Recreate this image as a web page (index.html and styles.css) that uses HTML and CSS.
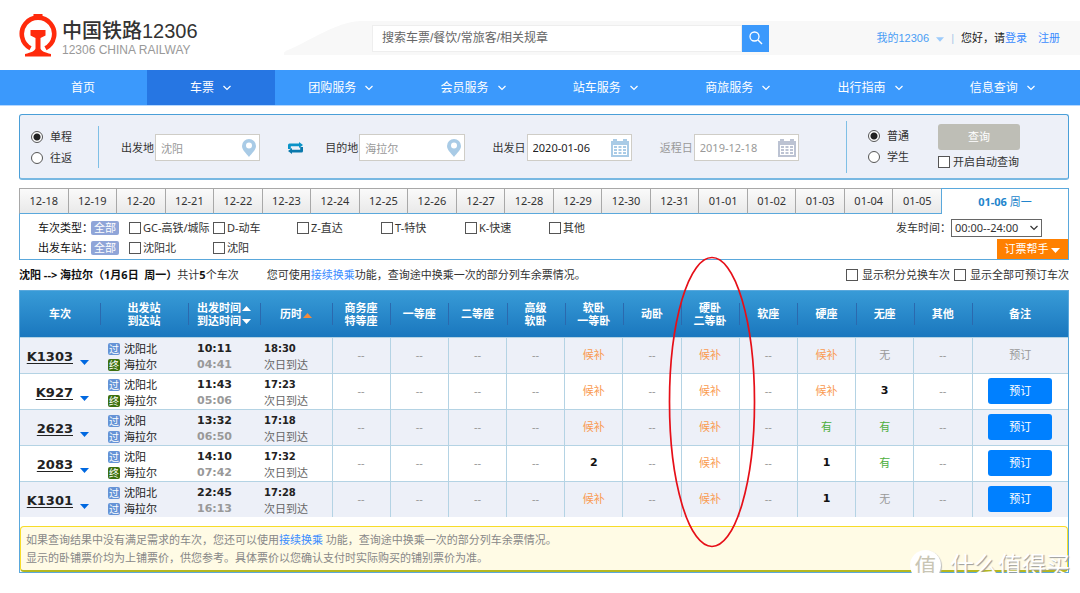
FILE: index.html
```html
<!DOCTYPE html>
<html lang="zh-CN">
<head>
<meta charset="utf-8">
<title>中国铁路12306</title>
<link rel="stylesheet" href="styles.css">
</head>
<body>
<svg class="defs" aria-hidden="true">
  <symbol id="chev" viewBox="0 0 10 6"><path d="M1.5 1 5 4.5 8.500 1" fill="none" stroke="currentColor" stroke-width="1.2"/></symbol>
  <symbol id="down" viewBox="0 0 9 5"><path d="M0 0h9L4.500 5z" fill="currentColor"/></symbol>
  <symbol id="up" viewBox="0 0 9 5"><path d="M0 5h9L4.500 0z" fill="currentColor"/></symbol>
  <symbol id="pin" viewBox="0 0 14 18"><path fill-rule="evenodd" d="M7 0a7 7 0 0 1 7 7c0 4-4 7-7 11C4 14 0 11 0 7a7 7 0 0 1 7-7zM7 3.500a3 3 0 1 0 0 6 3 3 0 0 0 0-6z" fill="#a9cbe6"/></symbol>
  <symbol id="cal" viewBox="0 0 18 18"><path fill="currentColor" d="M0 2h2V0h4v2h6V0h4v2h2v16H0z"/><path fill="#fff" d="M2 6h14v10H2z"/><path fill="currentColor" d="M3 7h3v2H3zm4.500 0h3v2h-3zM12 7h3v2h-3zm-9 3h3v2H3zm4.500 0h3v2h-3zm4.500 0h3v2h-3zm-9 3h3v2H3zm4.500 0h3v2h-3zm4.500 0h3v2h-3z"/></symbol>
</svg>

<header class="header">
  <a class="logo" href="#">
    <svg class="logo-mark" viewBox="0 0 38 43" width="38" height="43" aria-hidden="true">
      <path d="M14.500 0h9v2.500l3 1h-15l3-1z" fill="#ff2a0c"/>
      <path d="M11.500 34.200A16.200 16.200 0 1 1 26.500 34.200" fill="none" stroke="#ff2a0c" stroke-width="4.600"/>
      <path d="M11.500 16h15v5.500l-5 2.500v10.500c1 2.500 4 4 10.500 5.500v2.500H6V40c6.500-1.500 9.500-3 10.500-5.500V24l-5-2.500z" fill="#ff2a0c"/>
    </svg>
    <span class="logo-text"><strong>中国铁路12306</strong><small>12306 CHINA RAILWAY</small></span>
  </a>
  <div class="strip">
    <svg class="strip-cap" viewBox="0 0 88 34" width="88" height="34" aria-hidden="true"><path d="M0 34c-1-2 1-4 4-5C30 18 50 2 76 0h12v34z" fill="#f8f8f8"/></svg>
    <form class="search">
      <input type="text" aria-label="搜索" placeholder="搜索车票/餐饮/常旅客/相关规章">
      <button type="button" aria-label="搜索"><svg viewBox="0 0 14 14" width="14" height="14"><circle cx="5.500" cy="5.500" r="4.500" fill="none" stroke="#fff" stroke-width="1.300"/><path d="m9 9 4 4" stroke="#fff" stroke-width="1.500"/></svg></button>
    </form>
    <div class="account">
      <a class="mine" href="#">我的12306 <svg width="8" height="5"><use href="#down"/></svg></a>
      <span class="bar">|</span>
      <span>您好，请<a href="#">登录</a></span>
      <a class="join" href="#">注册</a>
    </div>
  </div>
</header>

<nav class="nav">
  <a href="#">首页</a>
  <a class="on" href="#">车票<svg><use href="#chev"/></svg></a>
  <a href="#">团购服务<svg><use href="#chev"/></svg></a>
  <a href="#">会员服务<svg><use href="#chev"/></svg></a>
  <a href="#">站车服务<svg><use href="#chev"/></svg></a>
  <a href="#">商旅服务<svg><use href="#chev"/></svg></a>
  <a href="#">出行指南<svg><use href="#chev"/></svg></a>
  <a href="#">信息查询<svg><use href="#chev"/></svg></a>
</nav>

<main class="main">
  <form class="panel">
    <div class="radios trip">
      <label><input type="radio" name="trip" checked>单程</label>
      <label><input type="radio" name="trip">往返</label>
    </div>
    <div class="fields">
      <label class="field">出发地<span class="box"><input type="text" value="沈阳"><svg class="pin"><use href="#pin"/></svg></span></label>
      <button class="swap" type="button" aria-label="交换"><svg viewBox="0 0 15 12" width="15" height="12"><path fill="#0a93c8" d="M0 7V3q0-1.500 1.500-1.500H11V0l4 3-4 3V4.200H2.800V7z"/><path fill="#0a78ac" d="M15 5v4q0 1.500-1.500 1.500H4V12L0 9l4-3v1.800h8.200V5z"/></svg></button>
      <label class="field">目的地<span class="box"><input type="text" value="海拉尔"><svg class="pin"><use href="#pin"/></svg></span></label>
      <label class="field">出发日<span class="box"><input class="dark" type="text" value="2020-01-06"><svg class="cal"><use href="#cal"/></svg></span></label>
      <label class="field muted">返程日<span class="box"><input type="text" value="2019-12-18"><svg class="cal off"><use href="#cal"/></svg></span></label>
    </div>
    <div class="radios kind">
      <label><input type="radio" name="kind" checked>普通</label>
      <label><input type="radio" name="kind">学生</label>
    </div>
    <div class="go">
      <button type="button">查询</button>
      <label><input type="checkbox">开启自动查询</label>
    </div>
  </form>

  <div class="dates">
    <button>12-18</button><button>12-19</button><button>12-20</button><button>12-21</button><button>12-22</button><button>12-23</button><button>12-24</button><button>12-25</button><button>12-26</button><button>12-27</button><button>12-28</button><button>12-29</button><button>12-30</button><button>12-31</button><button>01-01</button><button>01-02</button><button>01-03</button><button>01-04</button><button>01-05</button><button class="on"><b>01-06</b> 周一</button>
  </div>
  <section class="filters">
    <div class="filter-rows">
      <div class="filter"><span class="name">车次类型：</span><button class="all">全部</button>
        <label><input type="checkbox">GC-高铁/城际</label><label><input type="checkbox">D-动车</label><label><input type="checkbox">Z-直达</label><label><input type="checkbox">T-特快</label><label><input type="checkbox">K-快速</label><label><input type="checkbox">其他</label></div>
      <div class="filter"><span class="name">出发车站：</span><button class="all">全部</button>
        <label><input type="checkbox">沈阳北</label><label><input type="checkbox">沈阳</label></div>
    </div>
    <div class="side">
      <div class="depart"><label for="time">发车时间：</label><span class="select"><select id="time"><option>00:00--24:00</option></select><svg><use href="#chev"/></svg></span></div>
      <button class="helper">订票帮手 <svg width="9" height="5"><use href="#down"/></svg></button>
    </div>
  </section>

  <div class="summary">
    <p><b>沈阳 --&gt; 海拉尔（1月6日&nbsp; 周一）</b>共计<b>5</b>个车次</p>
    <p class="tip">您可使用<a href="#">接续换乘</a>功能，查询途中换乘一次的部分列车余票情况。</p>
    <div class="toggles"><label><input type="checkbox">显示积分兑换车次</label><label><input type="checkbox">显示全部可预订车次</label></div>
  </div>

  <section class="results">
    <table>
      <colgroup><col class="c-no"><col class="c-st"><col class="c-time"><col class="c-time"><col span="11"><col class="c-act"></colgroup>
      <thead><tr>
        <th><span>车次</span></th><th><span>出发站<br>到达站</span></th>
        <th><span>出发时间 <svg><use href="#up"/></svg><br>到达时间 <svg><use href="#down"/></svg></span></th>
        <th><span>历时 <svg class="sorted"><use href="#up"/></svg></span></th>
        <th><span>商务座<br>特等座</span></th><th><span>一等座</span></th><th><span>二等座</span></th><th><span>高级<br>软卧</span></th><th><span>软卧<br>一等卧</span></th><th><span>动卧</span></th><th><span>硬卧<br>二等卧</span></th><th><span>软座</span></th><th><span>硬座</span></th><th><span>无座</span></th><th><span>其他</span></th><th><span>备注</span></th>
      </tr></thead>
      <tbody>
      <tr><td class="no"><a href="#">K1303</a><svg><use href="#down"/></svg></td><td class="st"><div><i>过</i>沈阳北</div><div><i class="end">终</i>海拉尔</div></td><td class="tm"><b>10:11</b><b>04:41</b></td><td class="du"><b>18:30</b><span>次日到达</span></td><td>--</td><td>--</td><td>--</td><td>--</td><td class="wait">候补</td><td>--</td><td class="wait">候补</td><td>--</td><td class="wait">候补</td><td>无</td><td>--</td><td>预订</td></tr>
      <tr><td class="no"><a href="#">K927</a><svg><use href="#down"/></svg></td><td class="st"><div><i>过</i>沈阳北</div><div><i class="end">终</i>海拉尔</div></td><td class="tm"><b>11:43</b><b>05:06</b></td><td class="du"><b>17:23</b><span>次日到达</span></td><td>--</td><td>--</td><td>--</td><td>--</td><td class="wait">候补</td><td>--</td><td class="wait">候补</td><td>--</td><td class="wait">候补</td><td class="num">3</td><td>--</td><td><button>预订</button></td></tr>
      <tr><td class="no"><a href="#">2623</a><svg><use href="#down"/></svg></td><td class="st"><div><i>过</i>沈阳</div><div><i>过</i>海拉尔</div></td><td class="tm"><b>13:32</b><b>06:50</b></td><td class="du"><b>17:18</b><span>次日到达</span></td><td>--</td><td>--</td><td>--</td><td>--</td><td class="wait">候补</td><td>--</td><td class="wait">候补</td><td>--</td><td class="yes">有</td><td class="yes">有</td><td>--</td><td><button>预订</button></td></tr>
      <tr><td class="no"><a href="#">2083</a><svg><use href="#down"/></svg></td><td class="st"><div><i>过</i>沈阳</div><div><i class="end">终</i>海拉尔</div></td><td class="tm"><b>14:10</b><b>07:42</b></td><td class="du"><b>17:32</b><span>次日到达</span></td><td>--</td><td>--</td><td>--</td><td>--</td><td class="num">2</td><td>--</td><td class="wait">候补</td><td>--</td><td class="num">1</td><td class="yes">有</td><td>--</td><td><button>预订</button></td></tr>
      <tr><td class="no"><a href="#">K1301</a><svg><use href="#down"/></svg></td><td class="st"><div><i>过</i>沈阳北</div><div><i>过</i>海拉尔</div></td><td class="tm"><b>22:45</b><b>16:13</b></td><td class="du"><b>17:28</b><span>次日到达</span></td><td>--</td><td>--</td><td>--</td><td>--</td><td class="wait">候补</td><td>--</td><td class="wait">候补</td><td>--</td><td class="num">1</td><td>无</td><td>--</td><td><button>预订</button></td></tr>
      </tbody>
    </table>
    <div class="note">
      <p>如果查询结果中没有满足需求的车次，您还可以使用<a href="#">接续换乘</a> 功能，查询途中换乘一次的部分列车余票情况。</p>
      <p>显示的卧铺票价均为上铺票价，供您参考。具体票价以您确认支付时实际购买的铺别票价为准。</p>
    </div>
    <svg class="ring" viewBox="0 0 88 292" aria-hidden="true"><ellipse cx="44" cy="146" rx="42.500" ry="144.500" fill="none" stroke="#e60f18" stroke-width="1.700"/></svg>
    <div class="mark"><span class="disc">值</span><span>什么值得买</span></div>
  </section>
</main>
</body>
</html>
```

FILE: styles.css
```css
* { box-sizing: border-box; }
body {
  margin: 0;
  background: #fff;
  color: #333;
  font: 11px/16px "Noto Sans", "Noto Sans CJK SC", sans-serif;
}
button, input, select { font: inherit; color: inherit; }
button { padding: 0; border: 0; cursor: pointer; }
a { color: #3b8cff; text-decoration: none; }
p { margin: 0; }
.defs { display: none; }

input[type="radio"], input[type="checkbox"] {
  appearance: none;
  flex: none;
  width: 12px;
  height: 12px;
  margin: 0;
  border: 1px solid #555;
  background: #fff;
}
input[type="radio"] { border-radius: 50%; }
input[type="radio"]:checked { background: radial-gradient(#222 0 3px, #fff 4px); }

/* Header */
.header {
  display: flex;
  align-items: center;
  height: 70px;
  padding-left: 19px;
  font-family: "Liberation Sans", "Noto Sans CJK SC", sans-serif;
}
.logo { display: flex; gap: 5px; width: 265px; }
.logo-text { display: flex; flex-direction: column; }
.logo-text strong { font-size: 20px; line-height: 26px; font-weight: 500; color: #333; padding-top: 4px; }
.logo-text small { font-size: 12px; line-height: 12px; color: #999; white-space: nowrap; }
.strip {
  flex: 1;
  display: flex;
  align-items: center;
  height: 34px;
  margin-top: 6px;
  background: linear-gradient(#f8f8f8, #f8f8f8) no-repeat 88px 0;
}
.strip-cap { flex: none; }
.search { display: flex; flex: 0 1 397px; height: 27px; }
.search input {
  flex: 1;
  min-width: 0;
  padding: 0 9px;
  border: 1px solid #eee;
  background: #fff;
  font-size: 12px;
}
.search input::placeholder { color: #666; opacity: 1; }
.search button {
  display: grid;
  place-items: center;
  width: 27px;
  background: #3b99fc;
}
.account {
  display: flex;
  align-items: center;
  margin: 0 20px 0 auto;
  color: #222;
  white-space: nowrap;
}
.account .mine { color: #4a9df5; }
.mine svg { margin-left: 4px; color: #9ccbfb; }
.bar { margin: 0 7px; color: #aac8e8; }
.join { margin-left: 11px; }

/* Navigation */
.nav {
  display: grid;
  grid-template-columns: 128px 128px repeat(6, 1fr);
  height: 36px;
  padding: 0 11px 0 19px;
  background: #3b99fc;
  border-bottom: 1px solid #b5d7fe;
  font-size: 12px;
}
.nav a {
  display: flex;
  align-items: center;
  justify-content: center;
  gap: 8px;
  color: #fff;
}
.nav .on { background: #2676e3; }
.nav svg { width: 10px; height: 6px; }

.main { padding: 8px 11px 0 19px; }

/* Query panel */
.panel {
  display: flex;
  align-items: center;
  height: 66px;
  border: 1px solid #4a9fd8;
  border-bottom: 2px solid #78b8e2;
  border-radius: 3px;
  background: #edf0f8;
}
.radios { display: flex; flex-direction: column; justify-content: center; gap: 5px; }
.radios label { display: flex; align-items: center; gap: 7px; white-space: nowrap; }
.trip { height: 42px; padding-top: 2px; width: 79px; padding-left: 11px; border-right: 1px solid #7fbfe6; }
.kind { height: 52px; padding-left: 21px; width: 92px; border-left: 1px solid #7fbfe6; }
.fields { flex: 1; display: flex; align-items: center; gap: 28px; padding: 2px 47px 0 22px; }
.field { flex: 1; display: flex; align-items: center; white-space: nowrap; }
.muted { color: #999; }
.box { position: relative; flex: 1; margin-left: 1px; }
.box input {
  display: block;
  width: 100%;
  height: 27px;
  padding: 0 5px;
  border: 1px solid #cfcdc7;
  background: #fff;
  color: #999;
}
.box .dark { color: #222; }
.box svg { position: absolute; right: 4px; top: 5px; width: 14px; height: 18px; }
.box .cal { right: 3px; width: 18px; color: #a9cbe6; }
.box .off { color: #bcc3d3; }
.swap { width: 15px; height: 12px; margin-right: -6px; background: none; }
.swap svg { display: block; }
.go { width: 130px; display: flex; flex-direction: column; gap: 4px; }
.go button { width: 82px; height: 26px; border-radius: 3px; background: #bebeb6; color: #fff; }
.go label { display: flex; align-items: center; gap: 3px; }

/* Date tabs and filters */
.dates { display: grid; grid-template-columns: repeat(19, 1fr) 128px; margin-top: 8px; }
.dates button {
  height: 26px;
  border: solid #a8a8a8;
  border-width: 1px 0 0 1px;
  border-bottom: 1px solid #5aa8dc;
  background: linear-gradient(#fafafa, #e9e9e9);
}
.dates .on { border: 1px solid #5aa8dc; border-bottom: 0; background: #fff; color: #2284cc; }
.filters {
  display: flex;
  justify-content: space-between;
  border: 1px solid #5aa8dc;
  border-top: 0;
}
.filter-rows { display: flex; flex-direction: column; gap: 3px; padding: 5px 0 3px 18px; }
.filter { display: flex; align-items: center; height: 17px; }
.filter .name { width: 53px; white-space: nowrap; color: #111; }
.filter .all {
  width: 28px;
  height: 14px;
  margin-right: 10px;
  border-radius: 2px;
  background: #8fa5d8;
  color: #fff;
  line-height: 14px;
}
.filter label { display: flex; align-items: center; gap: 2px; width: 84px; white-space: nowrap; }
.side { display: flex; flex-direction: column; justify-content: space-between; align-items: flex-end; }
.depart { display: flex; align-items: center; padding: 5px 26px 0 0; }
.select { position: relative; }
.select select {
  appearance: none;
  display: block;
  width: 91px;
  height: 18px;
  padding: 0 3px;
  border: 1px solid #666;
  border-radius: 0;
  background: #fff;
  line-height: 16px;
}
.select svg { position: absolute; right: 3px; top: 6px; width: 10px; height: 6px; pointer-events: none; }
.helper { width: 71px; height: 20px; background: #ff8000; color: #fff; }
.helper svg { vertical-align: middle; }

/* Result summary */
.summary { display: flex; align-items: center; height: 30px; white-space: nowrap; }
.summary b { color: #111; }
.tip { margin-left: 28px; }
.toggles { display: flex; gap: 4px; margin-left: auto; }
.toggles label { display: flex; align-items: center; gap: 4px; }

/* Results */
.results { position: relative; border: 1px solid #5aa8dc; }
table { width: 100%; table-layout: fixed; border-collapse: collapse; }
.c-no { width: 80px; }
.c-st { width: 88px; }
.c-time { width: 72px; }
.c-act { width: 96px; }
thead tr { height: 46px; background: linear-gradient(#389bd7, #1a77be); }
th { padding: 0; color: #fff; line-height: 13px; white-space: nowrap; }
th span { display: block; }
th + th { background: linear-gradient(#2b69ae, #2b69ae) no-repeat 0 50% / 1px 22px; }
th svg { width: 9px; height: 5px; vertical-align: middle; margin-left: -2px; }
.sorted { color: #f58b3c; }
td {
  height: 36px;
  padding: 0;
  border-top: 1px solid #b4d3e4;
  border-left: 1px solid #b4d3e4;
  text-align: center;
  color: #999;
}
td:nth-child(-n+4) { border-left: 0; padding-top: 3px; text-align: left; white-space: nowrap; }
tbody tr:nth-child(odd) { background: #edf0f8; }
td.no { padding-right: 11px; text-align: right; }
.no a {
  color: #222;
  font: bold 13px/18px "DejaVu Sans", sans-serif;
  text-decoration: underline;
  text-underline-offset: 2px;
}
.no svg { width: 9px; height: 5px; margin-left: 7px; color: #0068e0; vertical-align: -4px; }
.st { color: #222; }
td.st { padding-left: 8px; color: #222; }
.st div { display: flex; align-items: center; gap: 4px; }
.st i {
  width: 12px;
  height: 12px;
  border-radius: 2px;
  background: #6593d6;
  color: #fff;
  font-size: 10px;
  font-style: normal;
  line-height: 12px;
  text-align: center;
}
.st .end { background: #3c700f; }
td.tm { padding-left: 9px; }
.tm b { display: block; color: #222; font: bold 11px/16px "DejaVu Sans", sans-serif; }
.tm b + b { color: #999; }
td.du { padding-left: 4px; color: #666; }
.du b { display: block; color: #222; font: bold 10px/16px "DejaVu Sans", sans-serif; }
.du span { display: block; }
td.wait { color: #fa9a50; }
td.yes { color: #4cae3c; }
td.num { color: #111; font: bold 11px/16px "DejaVu Sans", sans-serif; }
td button { width: 64px; height: 26px; border-radius: 3px; background: #0080ff; color: #fff; vertical-align: middle; }
.note {
  margin-top: 9px;
  padding: 4px 5px 3px;
  border: 1px solid #f7dc28;
  border-bottom: 2px solid #b5b820;
  border-radius: 4px;
  background: #fffbe5;
  color: #888;
  line-height: 18px;
}
.ring { position: absolute; top: -35px; right: 312px; width: 88px; height: 292px; pointer-events: none; }
.mark {
  position: absolute;
  right: -2px;
  bottom: -9px;
  display: flex;
  align-items: center;
  gap: 9px;
  color: #fff;
  font-size: 24px;
  line-height: 32px;
  text-shadow: 1px 1px 1px #999;
  white-space: nowrap;
  pointer-events: none;
}
.disc {
  width: 31px;
  height: 31px;
  border-radius: 50%;
  background: #fff;
  box-shadow: 1px 1px 1px #bbb;
  color: #c8c5b4;
  font-size: 22px;
  line-height: 30px;
  text-align: center;
  text-shadow: none;
}
```
